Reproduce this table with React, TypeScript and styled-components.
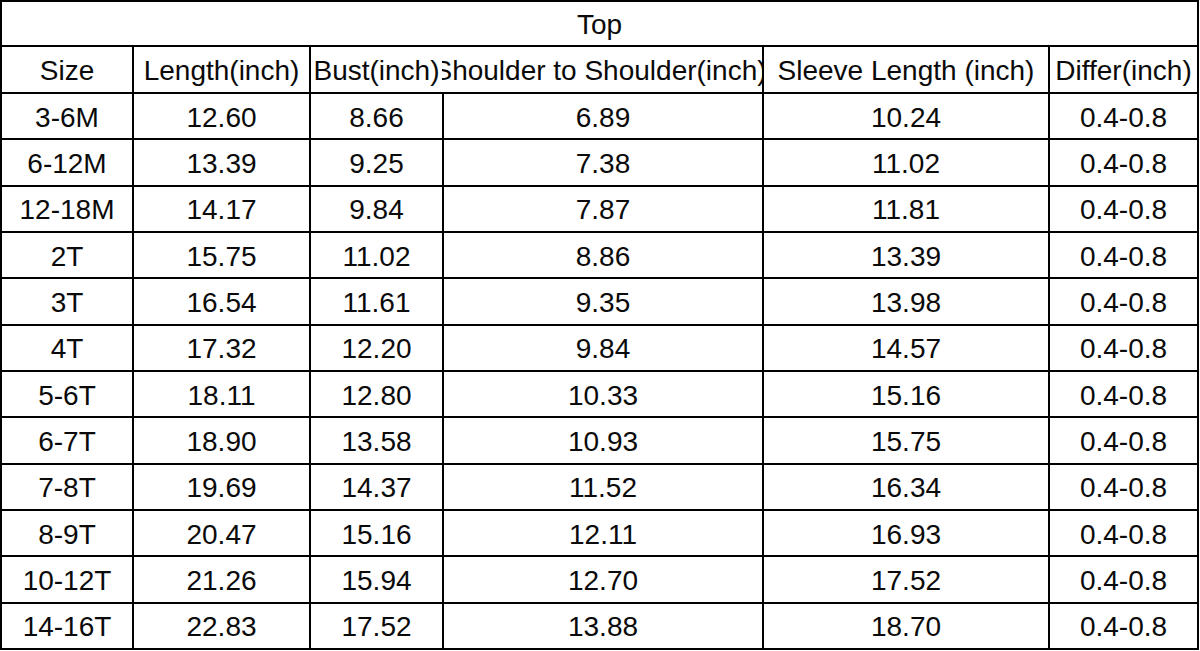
import React from "react";
import styled, { createGlobalStyle } from "styled-components";

const GlobalStyle = createGlobalStyle`
  html, body {
    margin: 0;
    padding: 0;
    background: #ffffff;
  }
  body {
    font-family: "Liberation Sans", Arial, sans-serif;
  }
`;

const Page = styled.div`
  width: 1200px;
  height: 651px;
  background: #ffffff;
  overflow: hidden;
`;

const SizeTable = styled.div`
  display: grid;
  width: 1199px;
  box-sizing: border-box;
  padding: 2px;
  gap: 2px;
  background: #000000;
  grid-template-columns: 130px 175px 131px 318px 284px 147px;
  grid-template-rows: 43px 45px repeat(12, 44.33px);
  font-family: "Liberation Sans", Arial, sans-serif;
  font-size: 28px;
  color: #0a0a0a;
`;

const Cell = styled.div`
  background: #ffffff;
  display: flex;
  align-items: center;
  justify-content: center;
  box-sizing: border-box;
  padding-top: 3px;
  white-space: nowrap;
  overflow: hidden;
  line-height: 1;
`;

const TitleCell = styled(Cell)`
  grid-column: 1 / -1;
`;

const HeaderCell = styled(Cell)<{ $spill?: boolean }>`
  margin-left: ${(p) => (p.$spill ? "-2px" : "0")};
  padding-right: ${(p) => (p.$spill ? "4px" : "0")};
`;

const DataCell = styled(Cell)``;

const headers = [
  "Size",
  "Length(inch)",
  "Bust(inch)",
  "Shoulder to Shoulder(inch)",
  "Sleeve Length (inch)",
  "Differ(inch)",
];

const rows: string[][] = [
  ["3-6M", "12.60", "8.66", "6.89", "10.24", "0.4-0.8"],
  ["6-12M", "13.39", "9.25", "7.38", "11.02", "0.4-0.8"],
  ["12-18M", "14.17", "9.84", "7.87", "11.81", "0.4-0.8"],
  ["2T", "15.75", "11.02", "8.86", "13.39", "0.4-0.8"],
  ["3T", "16.54", "11.61", "9.35", "13.98", "0.4-0.8"],
  ["4T", "17.32", "12.20", "9.84", "14.57", "0.4-0.8"],
  ["5-6T", "18.11", "12.80", "10.33", "15.16", "0.4-0.8"],
  ["6-7T", "18.90", "13.58", "10.93", "15.75", "0.4-0.8"],
  ["7-8T", "19.69", "14.37", "11.52", "16.34", "0.4-0.8"],
  ["8-9T", "20.47", "15.16", "12.11", "16.93", "0.4-0.8"],
  ["10-12T", "21.26", "15.94", "12.70", "17.52", "0.4-0.8"],
  ["14-16T", "22.83", "17.52", "13.88", "18.70", "0.4-0.8"],
];

export default function App() {
  return (
    <>
      <GlobalStyle />
      <Page>
        <SizeTable>
          <TitleCell>Top</TitleCell>
          {headers.map((h, i) => (
            <HeaderCell key={h} $spill={i === 3}>
              {h}
            </HeaderCell>
          ))}
          {rows.map((r) =>
            r.map((v, j) => <DataCell key={r[0] + "-" + j}>{v}</DataCell>)
          )}
        </SizeTable>
      </Page>
    </>
  );
}
